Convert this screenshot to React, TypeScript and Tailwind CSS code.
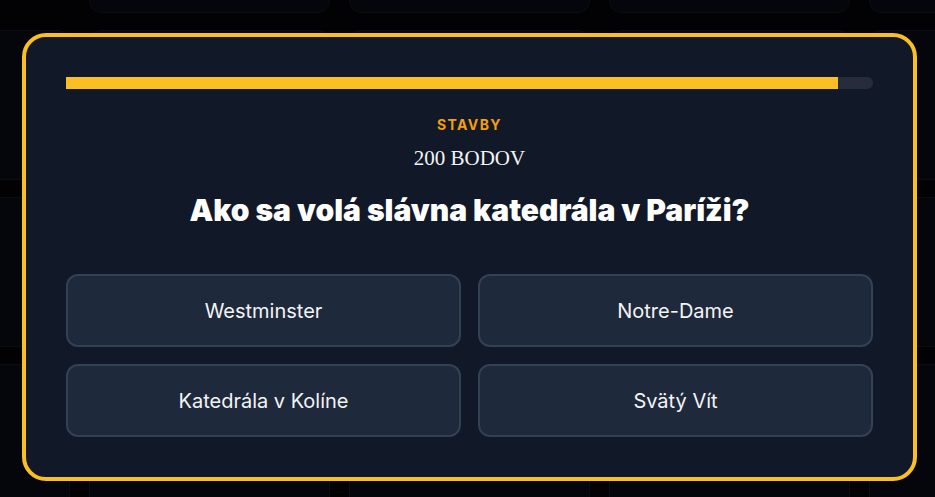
const columns = [0, 1, 2, 3, 4];
const rows = [0, 1, 2, 3];

const answers = ['Westminster', 'Notre-Dame', 'Katedrála v Kolíne', 'Svätý Vít'];

function Board() {
    return (
        <div className="flex flex-col gap-[17px] ml-[-171px] mt-[-137px]">
            {rows.map((r) => (
                <div key={r} className="flex gap-[19px]">
                    {columns.map((c) => (
                        <div
                            key={c}
                            className={
                                r === 0 && c === 0
                                    ? 'w-[241px] h-[150px] shrink-0'
                                    : 'w-[241px] h-[150px] shrink-0 rounded-xl border border-[#0b0d14] bg-[#04060b]'
                            }
                        />
                    ))}
                </div>
            ))}
        </div>
    );
}

export default function App() {
    return (
        <div
            className="relative w-[935px] h-[497px] overflow-hidden bg-[#020204]"
            style={{ fontFamily: 'Inter, "Noto Sans", sans-serif' }}
        >
            <Board />

            <div className="absolute inset-0 pt-[33px] pl-[22px]">
                <div className="w-[895px] rounded-3xl border-4 border-[#fbbf24] bg-[#111827] p-10">
                    <div className="relative h-3 rounded-full bg-[#262c3b]">
                        <div className="h-3 w-[95.7%] bg-[#fbbf24]" />
                    </div>

                    <div className="mt-[26px] text-center text-sm leading-5 font-bold tracking-widest text-[#f59e0b]">
                        STAVBY
                    </div>
                    <div
                        className="mt-[9px] text-center text-[21px] leading-7 text-gray-100"
                        style={{ fontFamily: '"Liberation Serif", "DejaVu Serif", serif' }}
                    >
                        200 BODOV
                    </div>

                    <h2 className="mt-5 text-center text-3xl leading-9 font-black text-white">
                        Ako sa volá slávna katedrála v Paríži?
                    </h2>

                    <div className="mt-[46px] grid grid-cols-2 gap-x-[17px] gap-y-[17px]">
                        {answers.map((a) => (
                            <button
                                key={a}
                                className="h-[73px] rounded-xl border-2 border-[#334155] bg-[#1e293b] text-xl font-normal text-gray-100"
                            >
                                {a}
                            </button>
                        ))}
                    </div>
                </div>
            </div>
        </div>
    );
}
